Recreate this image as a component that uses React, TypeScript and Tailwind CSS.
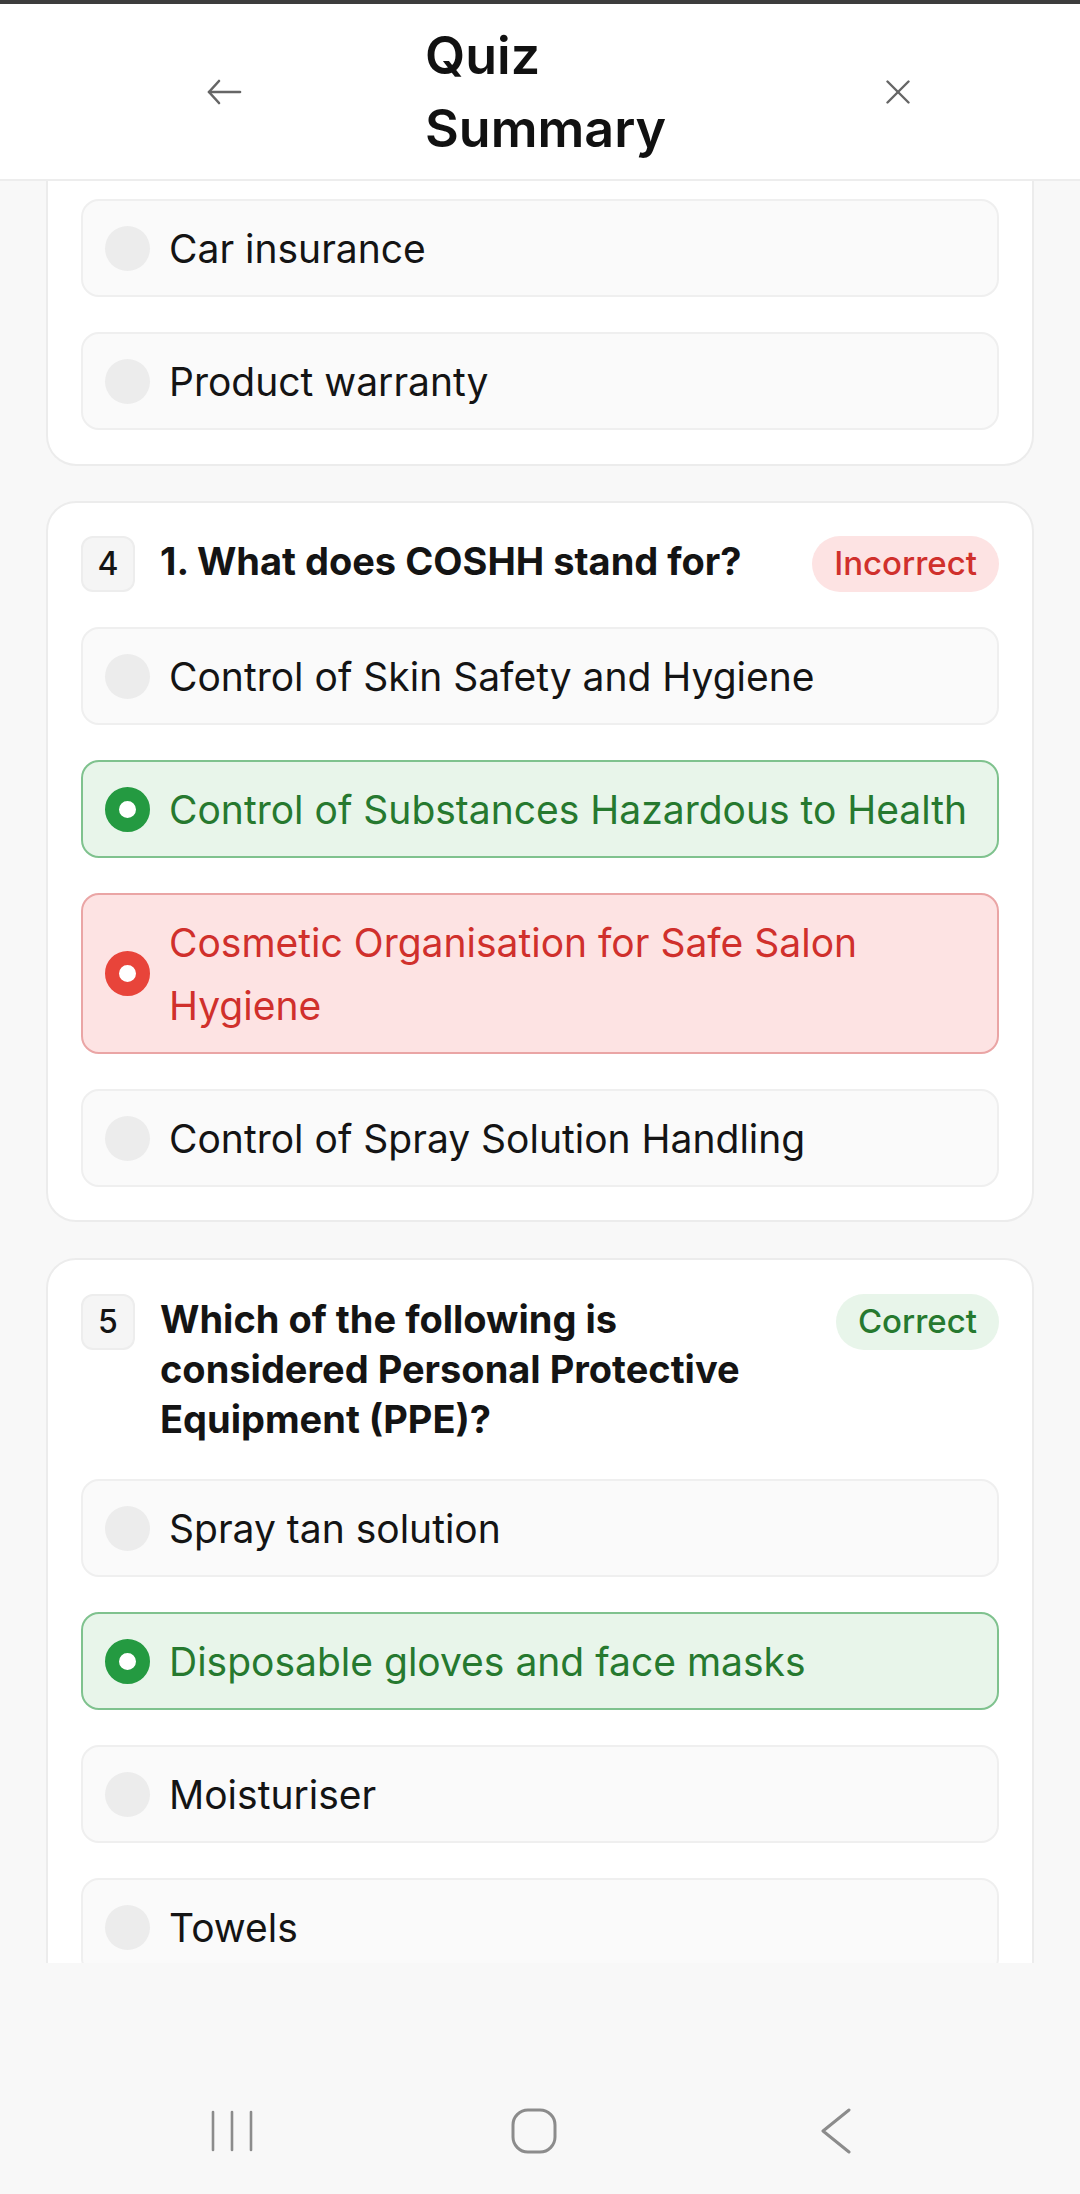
import React from "react";

type State = "none" | "correct" | "wrong";

function Radio({ state }: { state: State }) {
  if (state === "correct")
    return <div className="h-[45px] w-[45px] shrink-0 rounded-full border-[14.5px] border-[#249a41] bg-white" />;
  if (state === "wrong")
    return <div className="h-[45px] w-[45px] shrink-0 rounded-full border-[14.5px] border-[#e8443a] bg-white" />;
  return <div className="h-[45px] w-[45px] shrink-0 rounded-full bg-[#ececec]" />;
}

function Option({ text, state = "none" }: { text: string; state?: State }) {
  const box =
    state === "correct"
      ? "border-[#7fc28e] bg-[#e8f5ea] text-[#26792f]"
      : state === "wrong"
      ? "border-[#eaa5a5] bg-[#fde3e3] text-[#d0302c]"
      : "border-[#efefef] bg-[#fafafa] text-[#141414]";
  return (
    <div className={`flex items-center gap-[19px] rounded-[18px] border-[2px] py-[15.5px] pl-[22px] pr-[6px] ${box}`}>
      <Radio state={state} />
      <span className="text-[39px] leading-[63px]">{text}</span>
    </div>
  );
}

function QHeader({ num, title, correct }: { num: number; title: string; correct: boolean }) {
  return (
    <div className="flex items-start">
      <div className="flex h-[56px] w-[54px] shrink-0 items-center justify-center rounded-[12px] border-[2px] border-[#ededed] bg-[#f5f5f5] text-[32px] font-medium text-[#141414]">
        {num}
      </div>
      <div className="ml-[25px] flex-1 pr-[24px] text-[38px] font-bold leading-[50px] text-[#141414]">{title}</div>
      {correct ? (
        <div className="flex h-[56px] shrink-0 items-center rounded-full bg-[#e8f5ea] px-[22px] text-[33px] font-medium text-[#26792f]">
          Correct
        </div>
      ) : (
        <div className="flex h-[56px] shrink-0 items-center rounded-full bg-[#fde3e3] px-[22px] text-[33px] font-medium text-[#d0302c]">
          Incorrect
        </div>
      )}
    </div>
  );
}

export default function App() {
  return (
    <div
      className="flex h-[2194px] w-[1080px] flex-col overflow-hidden bg-[#f8f8f8]"
      style={{ fontFamily: "Inter, 'Noto Sans', sans-serif" }}
    >
      <div className="h-[4px] shrink-0 bg-[#3d3d3d]" />
      <header className="flex h-[177px] shrink-0 items-center border-b-[2px] border-[#ededed] bg-white">
        <button className="ml-[200px] flex h-[48px] w-[48px] items-center justify-center">
          <svg width="36" height="26" viewBox="0 0 36 26" fill="none" stroke="#666" strokeWidth="2.6" strokeLinecap="round" strokeLinejoin="round">
            <path d="M3 13H34" />
            <path d="M13 2 L3 13 L13 24" />
          </svg>
        </button>
        <h1 className="ml-[177px] w-[300px] text-[52px] font-semibold leading-[73px] text-[#111]">Quiz Summary</h1>
        <button className="ml-[149px] flex h-[48px] w-[48px] items-center justify-center">
          <svg width="24" height="24" viewBox="0 0 24 24" fill="none" stroke="#666" strokeWidth="2.4" strokeLinecap="round">
            <path d="M1.5 1.5 L22.5 22.5" />
            <path d="M22.5 1.5 L1.5 22.5" />
          </svg>
        </button>
      </header>

      <main className="h-[1782px] shrink-0 overflow-hidden">
        <section className="mx-[46px] flex flex-col gap-[35px] rounded-b-[30px] border-[2px] border-t-0 border-[#ececec] bg-white px-[33px] pb-[34px] pt-[18px]">
          <Option text="Car insurance" />
          <Option text="Product warranty" />
        </section>

        <section className="mx-[46px] mt-[35px] flex flex-col gap-[35px] rounded-[30px] border-[2px] border-[#ececec] bg-white px-[33px] py-[33px]">
          <QHeader num={4} title="1. What does COSHH stand for?" correct={false} />
          <Option text="Control of Skin Safety and Hygiene" />
          <Option text="Control of Substances Hazardous to Health" state="correct" />
          <Option text="Cosmetic Organisation for Safe Salon Hygiene" state="wrong" />
          <Option text="Control of Spray Solution Handling" />
        </section>

        <section className="mx-[46px] mt-[36px] flex flex-col gap-[35px] rounded-[30px] border-[2px] border-[#ececec] bg-white px-[33px] py-[34px]">
          <QHeader num={5} title="Which of the following is considered Personal Protective Equipment (PPE)?" correct={true} />
          <Option text="Spray tan solution" />
          <Option text="Disposable gloves and face masks" state="correct" />
          <Option text="Moisturiser" />
          <Option text="Towels" />
        </section>
      </main>

      <div className="flex-1" />
      <nav className="flex h-[126px] shrink-0 items-center">
        <div className="ml-[202px] flex h-[46px] w-[60px] items-center justify-center">
          <svg width="44" height="44" viewBox="0 0 44 44" fill="none" stroke="#8c8c8c" strokeWidth="2.6" strokeLinecap="round">
            <path d="M3 3V41" />
            <path d="M22 3V41" />
            <path d="M41 3V41" />
          </svg>
        </div>
        <div className="ml-[242px] flex h-[46px] w-[60px] items-center justify-center">
          <svg width="46" height="46" viewBox="0 0 46 46" fill="none" stroke="#8c8c8c" strokeWidth="3">
            <rect x="2" y="2" width="42" height="42" rx="15" />
          </svg>
        </div>
        <div className="ml-[242px] flex h-[46px] w-[60px] items-center justify-center">
          <svg width="32" height="46" viewBox="0 0 32 46" fill="none" stroke="#8c8c8c" strokeWidth="3" strokeLinecap="round" strokeLinejoin="round">
            <path d="M29 2 L3 23 L29 44" />
          </svg>
        </div>
      </nav>
    </div>
  );
}
